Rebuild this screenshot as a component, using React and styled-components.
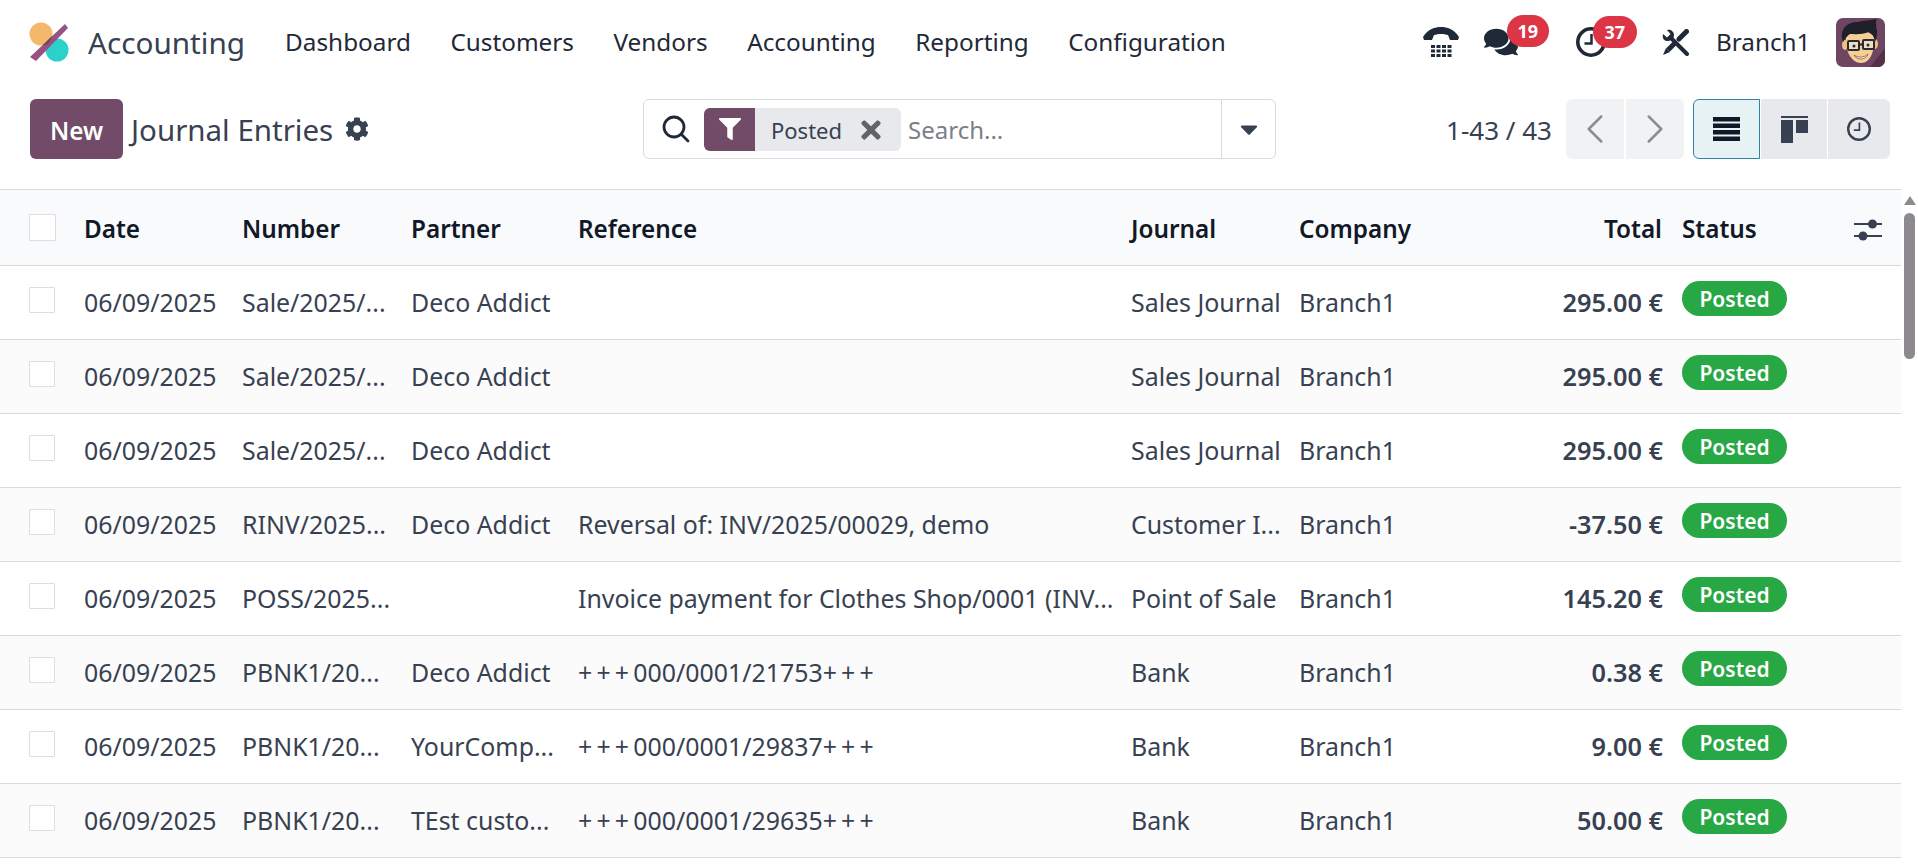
import React from 'react';
import styled, { createGlobalStyle } from 'styled-components';
import { FaComments, FaCog, FaFilter, FaTimes, FaCaretDown } from 'react-icons/fa';
import { ChevronLeft, ChevronRight } from 'lucide-react';

const GlobalStyle = createGlobalStyle`
  html, body {
    margin: 0;
    padding: 0;
    height: 100%;
    overflow: hidden;
    background: #fff;
    font-family: "Noto Sans", "Open Sans", sans-serif;
    color: #374151;
  }
  * { box-sizing: border-box; }
`;

const Page = styled.div`
  width: 1918px;
  height: 866px;
  display: flex;
  flex-direction: column;
  overflow: hidden;
`;

const TopBar = styled.header`
  height: 84px;
  flex: none;
  display: flex;
  align-items: center;
  padding: 0 33px 0 29px;
`;

const Brand = styled.div`
  display: flex;
  align-items: center;
  gap: 19px;
  font-size: 29.7px;
  color: #374151;
  margin-right: 40px;
`;

const Nav = styled.nav`
  display: flex;
  gap: 39.5px;
  padding-bottom: 2px;
  font-size: 24.3px;
  color: #1f2937;
`;

const Systray = styled.div`
  margin-left: auto;
  display: flex;
  align-items: center;
  color: #1f2937;
`;

const TrayIcon = styled.span`
  position: relative;
  display: flex;
  align-items: center;
  font-size: ${p => p.$size || 32}px;
  margin-right: ${p => p.$gap || 0}px;
`;

const Badge = styled.span`
  position: absolute;
  top: ${p => p.$top}px;
  left: ${p => p.$left}px;
  height: 32px;
  padding: 0 ${p => p.$pad}px;
  border-radius: 16px;
  background: #dc3545;
  color: #fff;
  font-size: 18px;
  font-weight: 700;
  display: flex;
  align-items: center;
`;

const UserName = styled.span`
  font-size: 24.3px;
  padding-bottom: 2px;
  margin-right: 25.5px;
`;

const ControlPanel = styled.div`
  height: 105px;
  flex: none;
  padding: 15px 28px 30px 30px;
  display: flex;
  align-items: stretch;
`;

const TitleGroup = styled.div`
  width: 614px;
  flex: none;
  display: flex;
  align-items: center;
`;

const NewButton = styled.button`
  width: 93px;
  height: 60px;
  padding: 2px 0 0;
  border: 0;
  border-radius: 6px;
  background: #714b67;
  color: #fff;
  font: 600 24.3px "Noto Sans", sans-serif;
  margin-right: 8px;
`;

const Title = styled.span`
  font-size: 29.5px;
  padding-top: 1px;
  color: #374151;
  margin-right: 12px;
`;

const GearIcon = styled(FaCog)`
  font-size: 24px;
  color: #374151;
  margin-bottom: 1px;
`;

const SearchBox = styled.div`
  width: 633px;
  margin-left: -1px;
  flex: none;
  border: 1px solid #d8dadd;
  border-radius: 6px;
  display: flex;
  align-items: center;
  padding-left: 18px;
`;

const Facet = styled.div`
  display: flex;
  align-items: stretch;
  height: 43px;
  margin-left: 14px;
  border-radius: 6px;
  overflow: hidden;
  background: #e7e9ed;
`;

const FacetIcon = styled.span`
  width: 51px;
  background: #714b67;
  color: #fff;
  display: flex;
  align-items: center;
  justify-content: center;
  font-size: 22px;
`;

const FacetLabel = styled.span`
  display: flex;
  align-items: center;
  gap: 15px;
  padding: 1px 16px 0 16px;
  font-size: 22px;
  color: #374151;
  svg { color: #5f636a; font-size: 28px; }
`;

const SearchPlaceholder = styled.span`
  flex: 1;
  margin-left: 7px;
  padding-top: 1px;
  font-size: 24px;
  color: #7b8088;
`;

const SearchToggle = styled.span`
  width: 54px;
  align-self: stretch;
  border-left: 1px solid #d8dadd;
  display: flex;
  align-items: center;
  justify-content: center;
  font-size: 28px;
  color: #374151;
`;

const PagerGroup = styled.div`
  margin-left: auto;
  display: flex;
  align-items: center;
`;

const PagerText = styled.span`
  font-size: 26px;
  padding-top: 2px;
  color: #374151;
  margin-right: 14px;
`;

const PagerButton = styled.span`
  width: 58px;
  height: 60px;
  background: #f1f2f4;
  color: #8a8d93;
  display: flex;
  align-items: center;
  justify-content: center;
  margin-right: ${p => p.$last ? 8 : 2}px;
  border-radius: ${p => p.$last ? '0 6px 6px 0' : '6px 0 0 6px'};
`;

const ViewButton = styled.span`
  width: ${p => p.$w}px;
  height: 60px;
  margin-left: 1px;
  display: flex;
  align-items: center;
  justify-content: center;
  color: #374151;
  background: ${p => p.$active ? '#e6f2f3' : '#e7e9ed'};
  border: ${p => p.$active ? '1px solid #2f83a8' : '0'};
  border-radius: ${p => p.$r};
`;

const Content = styled.div`
  flex: 1;
  min-height: 0;
  display: flex;
`;

const TableArea = styled.div`
  flex: 1;
  min-width: 0;
  overflow: hidden;
`;

const Table = styled.table`
  width: 1901px;
  table-layout: fixed;
  border-collapse: collapse;
`;

const Th = styled.th`
  height: 76px;
  padding: 2px 10px 0;
  background: #f9fafb;
  border-top: 1px solid #d8dadd;
  border-bottom: 1px solid #d8dadd;
  font-size: 24.3px;
  font-weight: 600;
  color: #111827;
  white-space: nowrap;
  text-align: ${p => p.$right ? 'right' : 'left'};
`;

const Row = styled.tr`
  background: ${p => p.$alt ? '#fbfbfb' : '#fff'};
`;

const Td = styled.td`
  height: 74px;
  padding: 0 ${p => p.$right ? 9 : 10}px 2px 10px;
  border-bottom: 1px solid #d8dadd;
  font-size: ${p => p.$bold ? 25.3 : 24.9}px;
  color: #374151;
  white-space: nowrap;
  overflow: hidden;
  text-align: ${p => p.$right ? 'right' : 'left'};
  font-weight: ${p => p.$bold ? 600 : 400};
`;

const CheckCell = styled.div`
  display: flex;
  padding-left: 19px;
  margin-bottom: ${p => p.$raised ? 4 : 2}px;
`;

const CheckBox = styled.span`
  width: ${p => p.$size}px;
  height: ${p => p.$size}px;
  flex: none;
  background: #fff;
  border: 1px solid #dcdee1;
  border-radius: 1px;
`;

const Pluses = styled.span`
  letter-spacing: 4.2px;
`;

const StatusPill = styled.span`
  display: flex;
  align-items: center;
  justify-content: center;
  width: 105px;
  height: 35px;
  margin-bottom: 6px;
  border-radius: 18px;
  background: #28a745;
  color: #fff;
  font-size: 21px;
  font-weight: 600;
`;

const ToggleIcon = styled.div`
  display: flex;
  padding: 2px 0 0 4px;
`;

const ScrollTrack = styled.div`
  width: 17px;
  flex: none;
  background: #fff;
  display: flex;
  flex-direction: column;
  align-items: center;
  padding-top: 7px;
`;

const ScrollArrow = styled.span`
  width: 0;
  height: 0;
  border-left: 6px solid transparent;
  border-right: 6px solid transparent;
  border-bottom: 9px solid #8c8a8f;
`;

const ScrollThumb = styled.span`
  width: 11px;
  height: 146px;
  margin-top: 8px;
  border-radius: 6px;
  background: #8c8a8f;
`;

const Logo = () => (
  <svg width="40" height="40" viewBox="0 0 40 40">
    <circle cx="12" cy="12" r="11.5" fill="#f4b86a" />
    <circle cx="28" cy="28" r="11.5" fill="#2ad2c9" />
    <path d="M36 2 L39 6 L7 39 L1 35 Z" fill="#985184" />
    <path d="M14 23 L23 14 L22 18 L18 23 Z" fill="#6b4a5a" />
  </svg>
);

const PhoneIcon = () => (
  <svg width="36" height="30" viewBox="0 0 36 30" fill="currentColor">
    <path d="M0 10 C5 2 12 0 18 0 C24 0 31 2 36 10 L35 13 L27 13 L25 8 C21 6.5 15 6.5 11 8 L9 13 L1 13 Z" />
    {[18, 22.5, 27].map(y => [8, 13.5, 19, 24.5].map(x => (
      <rect key={`${x}-${y}`} x={x} y={y} width="4" height="3" />
    )))}
  </svg>
);

const ClockIcon = ({ size, stroke }) => (
  <svg width={size} height={size} viewBox="0 0 30 30" fill="none" stroke="currentColor" strokeWidth={stroke}>
    <circle cx="15" cy="15" r={15 - stroke / 2} />
    <path d="M15.5 7 V16.5 H8.5" strokeWidth={stroke * 0.7} />
  </svg>
);

const ToolsIcon = () => (
  <svg width="27" height="27" viewBox="0 0 27 27" fill="none" stroke="currentColor">
    <path d="M24.5 2.5 L17 10" strokeWidth="5" strokeLinecap="round" />
    <path d="M13 14 L6 21" strokeWidth="5" />
    <path d="M4 19 L8 23 L1 26 Z" fill="currentColor" stroke="none" />
    <path d="M9 9 L25 25" strokeWidth="4" strokeLinecap="round" />
    <path d="M1 5 L5 8.5 L8.5 5 L5 1 C8 0 12 2 12 6 C12 10 8 12 5 12 C2 12 0 9 1 5 Z" fill="currentColor" stroke="none" />
  </svg>
);

const SearchIcon = () => (
  <svg width="28" height="28" viewBox="0 0 28 28" fill="none" stroke="#1f2937" strokeWidth="2.8" strokeLinecap="round">
    <circle cx="12" cy="12" r="10" />
    <path d="M19.5 19.5 L26 26" />
  </svg>
);

const ListIcon = () => (
  <svg width="28" height="24" viewBox="0 0 28 24" fill="#111827">
    <rect x="0" y="0" width="27" height="4.5" />
    <rect x="0" y="6.5" width="27" height="4.5" />
    <rect x="0" y="13" width="27" height="4.5" />
    <rect x="0" y="19.5" width="27" height="4.5" />
  </svg>
);

const KanbanIcon = () => (
  <svg width="27" height="27" viewBox="0 0 27 27" fill="#374151">
    <rect x="0" y="0" width="27" height="2" />
    <rect x="0" y="4" width="12" height="23" />
    <rect x="15" y="4" width="12" height="13" />
  </svg>
);

const SlidersIcon = () => (
  <svg width="28" height="24" viewBox="0 0 28 24" fill="#374151">
    <rect x="0" y="5" width="28" height="2" />
    <rect x="0" y="17" width="28" height="2" />
    <circle cx="18.5" cy="6" r="4.5" />
    <circle cx="9" cy="18" r="4.5" />
  </svg>
);

const Avatar = () => (
  <svg width="49" height="49" viewBox="0 0 49 49">
    <rect width="49" height="49" rx="7" fill="#6e4662" />
    <path d="M34 49 L49 30 V42 a7 7 0 0 1 -7 7 Z" fill="#56304a" />
    <path d="M10 20 C9 34 16 45 25 45 C34 45 39 34 38 18 L30 13 L14 14 Z" fill="#f6cf95" />
    <ellipse cx="9" cy="27" rx="3" ry="5" fill="#f0bd82" />
    <ellipse cx="39" cy="26" rx="3" ry="5" fill="#f0bd82" />
    <path d="M7 24 C3 12 10 4 22 4 C30 2 38 2 41 1 C39 4 41 6 40 9 C42 13 41 20 39 24 C38 18 36 16 33 14 C26 17 18 16 14 16 C11 18 9 20 7 24 Z" fill="#1f2029" />
    <rect x="12" y="23" width="11" height="9" rx="1" fill="#e8dfc8" stroke="#2a2a30" strokeWidth="2" />
    <rect x="27" y="22" width="11" height="9" rx="1" fill="#e8dfc8" stroke="#2a2a30" strokeWidth="2" />
    <path d="M23 27 L27 26" stroke="#2a2a30" strokeWidth="2" />
    <circle cx="18" cy="28" r="1.5" fill="#2a2a30" />
    <circle cx="32" cy="27" r="1.5" fill="#2a2a30" />
    <path d="M18 37 C22 40 28 40 32 36 C30 42 21 43 18 37 Z" fill="#fff" stroke="#8a4b3a" strokeWidth="0.8" />
  </svg>
);

const columns = [74, 158, 169, 167, 553, 168, 231, 152, 168, 61];

const navItems = ['Dashboard', 'Customers', 'Vendors', 'Accounting', 'Reporting', 'Configuration'];

const entries = [
  ['Sale/2025/...', 'Deco Addict', '', 'Sales Journal', '295.00 €'],
  ['Sale/2025/...', 'Deco Addict', '', 'Sales Journal', '295.00 €'],
  ['Sale/2025/...', 'Deco Addict', '', 'Sales Journal', '295.00 €'],
  ['RINV/2025...', 'Deco Addict', 'Reversal of: INV/2025/00029, demo', 'Customer I...', '-37.50 €'],
  ['POSS/2025...', '', 'Invoice payment for Clothes Shop/0001 (INV...', 'Point of Sale', '145.20 €'],
  ['PBNK1/20...', 'Deco Addict', <><Pluses>+++</Pluses>000/0001/21753<Pluses>+++</Pluses></>, 'Bank', '0.38 €'],
  ['PBNK1/20...', 'YourComp...', <><Pluses>+++</Pluses>000/0001/29837<Pluses>+++</Pluses></>, 'Bank', '9.00 €'],
  ['PBNK1/20...', 'TEst custo...', <><Pluses>+++</Pluses>000/0001/29635<Pluses>+++</Pluses></>, 'Bank', '50.00 €'],
];

const App = () => (
  <Page>
    <GlobalStyle />
    <TopBar>
      <Brand>
        <Logo />
        Accounting
      </Brand>
      <Nav>
        {navItems.map(item => <span key={item}>{item}</span>)}
      </Nav>
      <Systray>
        <TrayIcon $gap={25}><PhoneIcon /></TrayIcon>
        <TrayIcon $size={34} $gap={58}>
          <FaComments />
          <Badge $left={22.5} $top={-10.5} $pad={10.5}>19</Badge>
        </TrayIcon>
        <TrayIcon $gap={56}>
          <ClockIcon size={30} stroke={3.6} />
          <Badge $left={16.5} $top={-11} $pad={11.5}>37</Badge>
        </TrayIcon>
        <TrayIcon $gap={26.5}><ToolsIcon /></TrayIcon>
        <UserName>Branch1</UserName>
        <Avatar />
      </Systray>
    </TopBar>

    <ControlPanel>
      <TitleGroup>
        <NewButton>New</NewButton>
        <Title>Journal Entries</Title>
        <GearIcon />
      </TitleGroup>
      <SearchBox>
        <SearchIcon />
        <Facet>
          <FacetIcon><FaFilter /></FacetIcon>
          <FacetLabel>Posted <FaTimes /></FacetLabel>
        </Facet>
        <SearchPlaceholder>Search...</SearchPlaceholder>
        <SearchToggle><FaCaretDown /></SearchToggle>
      </SearchBox>
      <PagerGroup>
        <PagerText>1-43 / 43</PagerText>
        <PagerButton><ChevronLeft size={50} strokeWidth={1.2} /></PagerButton>
        <PagerButton $last><ChevronRight size={50} strokeWidth={1.2} /></PagerButton>
        <ViewButton $active $w={67} $r="6px 0 0 6px"><ListIcon /></ViewButton>
        <ViewButton $w={66} $r="0"><KanbanIcon /></ViewButton>
        <ViewButton $w={62} $r="0 6px 6px 0"><ClockIcon size={24} stroke={3} /></ViewButton>
      </PagerGroup>
    </ControlPanel>

    <Content>
      <TableArea>
        <Table>
          <colgroup>
            {columns.map((w, i) => <col key={i} width={w} />)}
          </colgroup>
          <thead>
            <tr>
              <Th><CheckCell><CheckBox $size={27} /></CheckCell></Th>
              <Th>Date</Th>
              <Th>Number</Th>
              <Th>Partner</Th>
              <Th>Reference</Th>
              <Th>Journal</Th>
              <Th>Company</Th>
              <Th $right>Total</Th>
              <Th>Status</Th>
              <Th><ToggleIcon><SlidersIcon /></ToggleIcon></Th>
            </tr>
          </thead>
          <tbody>
            {entries.map((e, i) => (
              <Row key={i} $alt={i % 2 === 1}>
                <Td><CheckCell $raised><CheckBox $size={26} /></CheckCell></Td>
                <Td>06/09/2025</Td>
                <Td>{e[0]}</Td>
                <Td>{e[1]}</Td>
                <Td>{e[2]}</Td>
                <Td>{e[3]}</Td>
                <Td>Branch1</Td>
                <Td $right $bold>{e[4]}</Td>
                <Td><StatusPill>Posted</StatusPill></Td>
                <Td />
              </Row>
            ))}
          </tbody>
        </Table>
      </TableArea>
      <ScrollTrack>
        <ScrollArrow />
        <ScrollThumb />
      </ScrollTrack>
    </Content>
  </Page>
);

export default App;
